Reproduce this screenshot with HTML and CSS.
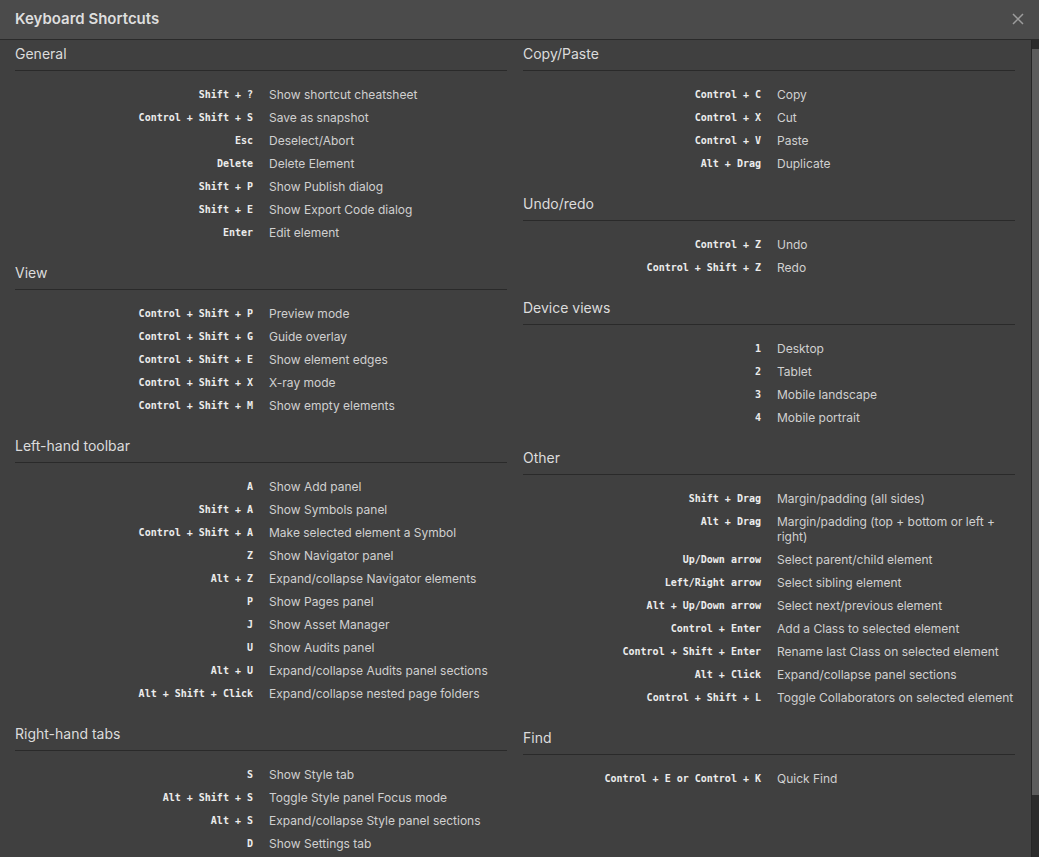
FILE: index.html
```html
<!DOCTYPE html>
<html>
<head>
<meta charset="utf-8">
<link rel="stylesheet" href="styles.css">
</head>
<body>
<div class="dialog">
  <header class="header">
    <h1 class="title">Keyboard Shortcuts</h1>
    <svg class="close" width="12" height="12" viewBox="0 0 12 12"><path d="M1 1 L11 11 M11 1 L1 11" stroke="#9c9c9c" stroke-width="1.5" fill="none"/></svg>
  </header>
  <div class="body">
    <div class="content">
      <div class="column">
        <section class="section">
          <h2 class="section-title">General</h2>
          <ul class="list">
            <li class="row"><span class="key">Shift + ?</span><span class="desc">Show shortcut cheatsheet</span></li>
            <li class="row"><span class="key">Control + Shift + S</span><span class="desc">Save as snapshot</span></li>
            <li class="row"><span class="key">Esc</span><span class="desc">Deselect/Abort</span></li>
            <li class="row"><span class="key">Delete</span><span class="desc">Delete Element</span></li>
            <li class="row"><span class="key">Shift + P</span><span class="desc">Show Publish dialog</span></li>
            <li class="row"><span class="key">Shift + E</span><span class="desc">Show Export Code dialog</span></li>
            <li class="row"><span class="key">Enter</span><span class="desc">Edit element</span></li>
          </ul>
        </section>
        <section class="section">
          <h2 class="section-title">View</h2>
          <ul class="list">
            <li class="row"><span class="key">Control + Shift + P</span><span class="desc">Preview mode</span></li>
            <li class="row"><span class="key">Control + Shift + G</span><span class="desc">Guide overlay</span></li>
            <li class="row"><span class="key">Control + Shift + E</span><span class="desc">Show element edges</span></li>
            <li class="row"><span class="key">Control + Shift + X</span><span class="desc">X-ray mode</span></li>
            <li class="row"><span class="key">Control + Shift + M</span><span class="desc">Show empty elements</span></li>
          </ul>
        </section>
        <section class="section">
          <h2 class="section-title">Left-hand toolbar</h2>
          <ul class="list">
            <li class="row"><span class="key">A</span><span class="desc">Show Add panel</span></li>
            <li class="row"><span class="key">Shift + A</span><span class="desc">Show Symbols panel</span></li>
            <li class="row"><span class="key">Control + Shift + A</span><span class="desc">Make selected element a Symbol</span></li>
            <li class="row"><span class="key">Z</span><span class="desc">Show Navigator panel</span></li>
            <li class="row"><span class="key">Alt + Z</span><span class="desc">Expand/collapse Navigator elements</span></li>
            <li class="row"><span class="key">P</span><span class="desc">Show Pages panel</span></li>
            <li class="row"><span class="key">J</span><span class="desc">Show Asset Manager</span></li>
            <li class="row"><span class="key">U</span><span class="desc">Show Audits panel</span></li>
            <li class="row"><span class="key">Alt + U</span><span class="desc">Expand/collapse Audits panel sections</span></li>
            <li class="row"><span class="key">Alt + Shift + Click</span><span class="desc">Expand/collapse nested page folders</span></li>
          </ul>
        </section>
        <section class="section">
          <h2 class="section-title">Right-hand tabs</h2>
          <ul class="list">
            <li class="row"><span class="key">S</span><span class="desc">Show Style tab</span></li>
            <li class="row"><span class="key">Alt + Shift + S</span><span class="desc">Toggle Style panel Focus mode</span></li>
            <li class="row"><span class="key">Alt + S</span><span class="desc">Expand/collapse Style panel sections</span></li>
            <li class="row"><span class="key">D</span><span class="desc">Show Settings tab</span></li>
          </ul>
        </section>
      </div>
      <div class="column">
        <section class="section">
          <h2 class="section-title">Copy/Paste</h2>
          <ul class="list">
            <li class="row"><span class="key">Control + C</span><span class="desc">Copy</span></li>
            <li class="row"><span class="key">Control + X</span><span class="desc">Cut</span></li>
            <li class="row"><span class="key">Control + V</span><span class="desc">Paste</span></li>
            <li class="row"><span class="key">Alt + Drag</span><span class="desc">Duplicate</span></li>
          </ul>
        </section>
        <section class="section">
          <h2 class="section-title">Undo/redo</h2>
          <ul class="list">
            <li class="row"><span class="key">Control + Z</span><span class="desc">Undo</span></li>
            <li class="row"><span class="key">Control + Shift + Z</span><span class="desc">Redo</span></li>
          </ul>
        </section>
        <section class="section">
          <h2 class="section-title">Device views</h2>
          <ul class="list">
            <li class="row"><span class="key">1</span><span class="desc">Desktop</span></li>
            <li class="row"><span class="key">2</span><span class="desc">Tablet</span></li>
            <li class="row"><span class="key">3</span><span class="desc">Mobile landscape</span></li>
            <li class="row"><span class="key">4</span><span class="desc">Mobile portrait</span></li>
          </ul>
        </section>
        <section class="section">
          <h2 class="section-title">Other</h2>
          <ul class="list">
            <li class="row"><span class="key">Shift + Drag</span><span class="desc">Margin/padding (all sides)</span></li>
            <li class="row"><span class="key">Alt + Drag</span><span class="desc">Margin/padding (top + bottom or left + right)</span></li>
            <li class="row"><span class="key">Up/Down arrow</span><span class="desc">Select parent/child element</span></li>
            <li class="row"><span class="key">Left/Right arrow</span><span class="desc">Select sibling element</span></li>
            <li class="row"><span class="key">Alt + Up/Down arrow</span><span class="desc">Select next/previous element</span></li>
            <li class="row"><span class="key">Control + Enter</span><span class="desc">Add a Class to selected element</span></li>
            <li class="row"><span class="key">Control + Shift + Enter</span><span class="desc">Rename last Class on selected element</span></li>
            <li class="row"><span class="key">Alt + Click</span><span class="desc">Expand/collapse panel sections</span></li>
            <li class="row"><span class="key">Control + Shift + L</span><span class="desc">Toggle Collaborators on selected element</span></li>
          </ul>
        </section>
        <section class="section">
          <h2 class="section-title">Find</h2>
          <ul class="list">
            <li class="row"><span class="key">Control + E or Control + K</span><span class="desc">Quick Find</span></li>
          </ul>
        </section>
      </div>
    </div>
    <div class="scrollbar"><div class="thumb"></div></div>
  </div>
</div>
</body>
</html>
```

FILE: styles.css
```css
* { box-sizing: border-box; }
html, body { margin: 0; padding: 0; }
body {
  background: #404040;
  font-family: Inter, "Noto Sans", sans-serif;
  color: #d4d4d4;
  width: 1039px;
  height: 857px;
  overflow: hidden;
}
.dialog {
  display: flex;
  flex-direction: column;
  height: 857px;
}
.header {
  flex: 0 0 40px;
  height: 40px;
  display: flex;
  align-items: center;
  justify-content: space-between;
  padding: 0 15px 1px 15px;
  background: #4b4b4b;
  border-bottom: 1px solid #2a2a2a;
}
.title {
  margin: 0;
  font-size: 15px;
  font-weight: 600;
  color: #dedede;
  line-height: 18px;
}
.close { display: block; }
.body {
  flex: 1;
  display: flex;
  min-height: 0;
}
.content {
  flex: 1;
  display: flex;
  gap: 16px;
  padding: 5px 16px 0 15px;
  overflow: hidden;
}
.column {
  flex: 1;
  min-width: 0;
}
.section { margin-bottom: 20px; }
.section-title {
  margin: 0;
  font-size: 14px;
  font-weight: 400;
  line-height: 18px;
  color: #dcdcdc;
  padding-bottom: 7px;
  border-bottom: 1px solid #2a2a2a;
}
.list {
  list-style: none;
  margin: 0;
  padding: 12px 0 0 0;
}
.row {
  display: flex;
  align-items: flex-start;
  padding: 4px 0;
  line-height: 15px;
}
.key {
  flex: 0 0 50%;
  padding: 1px 8px 0 0;
  line-height: 14px;
  text-align: right;
  font-family: "DejaVu Sans Mono", "Liberation Mono", monospace;
  font-weight: bold;
  font-size: 10px;
  color: #ececec;
  white-space: nowrap;
}
.desc {
  flex: 1;
  padding-left: 8px;
  font-size: 12px;
  line-height: 15px;
  color: #d0d0d0;
}
.scrollbar {
  flex: 0 0 8px;
  background: #2b2b2b;
  border-left: 1px solid #262626;
  padding-top: 9px;
}
.thumb {
  height: 746px;
  background: #5c5c5c;
}
```
